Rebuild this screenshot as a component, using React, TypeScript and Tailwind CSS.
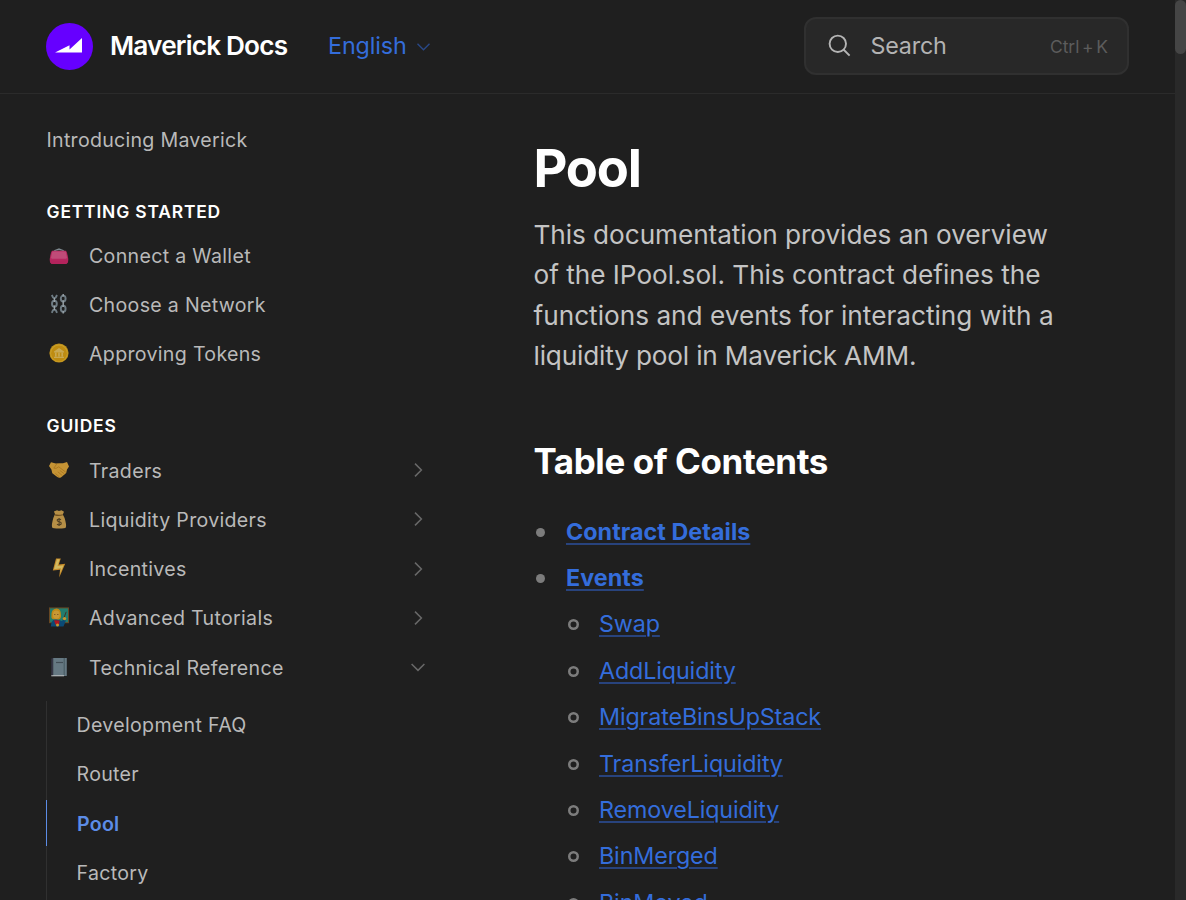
import React from "react";

type IconProps = { children: React.ReactNode };

function Emoji({ children }: IconProps) {
  return (
    <svg viewBox="0 0 20 20" className="mb-[2px] h-[20px] w-[20px] shrink-0 opacity-80">
      {children}
    </svg>
  );
}

const Purse = () => (
  <Emoji>
    <path d="M4 8 Q5 5 10 4.4 Q15 5 16 8" fill="none" stroke="#8b9ba3" strokeWidth="1.4" />
    <path d="M8 4.8 Q10 3.2 12 4.8" fill="none" stroke="#9aa8ae" strokeWidth="1.2" />
    <path d="M3 5.8H17Q18.2 7 19.2 13.5Q19.7 18.8 16.5 19H3.5Q.3 18.8 .8 13.5Q1.8 7 3 5.8Z" fill="#dc2a70" />
    <path d="M3.4 6.4H16.6L17.8 11.5Q18.4 13.6 17 13.8H3Q1.6 13.6 2.2 11.5Z" fill="#e8568f" />
    <path d="M1 15Q10 16.4 19 15Q19 19 16.5 19H3.5Q1 19 1 15Z" fill="#d8246c" />
  </Emoji>
);

const Chains = () => (
  <Emoji>
    <g fill="none" stroke="#82939d" strokeWidth="1.9">
      <path d="M2.8 1 L4 3.4 Q5.4 4.4 6.8 3.4 L8 1" />
      <ellipse cx="5.4" cy="9.8" rx="2.4" ry="3" />
      <path d="M2.8 18.8 L4 16.2 Q5.4 15.2 6.8 16.2 L8 18.8" />
      <ellipse cx="14.2" cy="4.6" rx="2.4" ry="3" />
      <ellipse cx="14.2" cy="14.8" rx="2.4" ry="3" />
    </g>
    <path d="M5.4 4v4M5.4 11.5v4.5M14.2 6.3v6.6M14.2 0v2.6M14.2 17v2.4" stroke="#b9c6cc" strokeWidth="1.4" />
  </Emoji>
);

const Coin = () => (
  <Emoji>
    <circle cx="10" cy="10" r="9.6" fill="#e8ae1c" />
    <circle cx="10" cy="10.2" r="8.6" fill="#f8c32b" />
    <circle cx="10" cy="10.3" r="7.9" fill="#e6a80f" />
    <path d="M5 8.6L10 5L15 8.6V9.4H5ZM6 9.8h1.6v3.6H6ZM9.2 9.8h1.6v3.6H9.2ZM12.4 9.8H14v3.6h-1.6ZM5 13.8h10V15H5Z" fill="#f3cc62" />
  </Emoji>
);

const Handshake = () => (
  <Emoji>
    <path d="M0 6L2 2.2L7 3.4L10 3.2L14 3.2L18 2L20 6.5L18 9.5L17.2 13L12.2 17.2Q10.2 18.5 8.3 17.1L3.3 13.2L2.4 9.5Z" fill="#efb03a" />
    <path d="M8 3.6L4.8 8.2Q7.2 9.2 9.7 6.8L16.8 12.2M13.4 15.6L8.8 11.8M10.4 17L6.4 13.4M15.3 13.8L10.8 10.4" fill="none" stroke="#c98a1e" strokeWidth=".8" />
  </Emoji>
);

const MoneyBag = () => (
  <Emoji>
    <path d="M6 5L4.9 2.5L8 1.3L10 2L12.5 1.2L15 2.7L13.8 5.5L15.6 9Q17.8 16.5 16.8 18.4Q16.2 19.4 10 19.4Q3.8 19.4 3.2 18.4Q2.2 16.5 4.3 9Z" fill="#dcab50" />
    <path d="M6 5.9Q10 7 13.8 5.7" fill="none" stroke="#855c1e" strokeWidth="1.1" />
    <path d="M12 10.8Q10 9.4 8.4 10.6Q7.6 12.3 10.2 12.8Q12.9 13.4 12 15.2Q10 16.5 8 15.2M10.1 9V17" fill="none" stroke="#594422" strokeWidth="1.1" />
  </Emoji>
);

const Bolt = () => (
  <Emoji>
    <path d="M7 .4H11.8L9.8 6.6L16.2 5.8L10.2 19.4L11 11.8L3.8 12.6Z" fill="#efa52a" />
    <path d="M8 1.2H10.6L8.6 7.9L14.6 7.2L10.9 15.5L12 10.2L5 11.2Z" fill="#ffe070" />
  </Emoji>
);

const Teacher = () => (
  <Emoji>
    <path d="M0 .4H20V16.2H0Z" fill="#795225" />
    <path d="M1 1.4H19V15.2H1Z" fill="#229582" />
    <path d="M1.8 19.5L2.5 15.2Q4 12.2 7 12L12.8 14L15.2 12L16.8 13.8L14.5 19.5Z" fill="#07558b" />
    <path d="M2.4 9.5Q1.8 1.8 7.4 1.4Q12 1.2 12 8Q12.3 12.2 9.5 12.5L4.7 12.3Q2 11.8 2.4 9.5Z" fill="#e9a414" />
    <ellipse cx="7.3" cy="7.7" rx="3.4" ry="4.1" fill="#f2b83c" />
    <path d="M5.4 7.5h.9M8.4 7.5h.9" stroke="#704619" />
    <path d="M5 13.2L10.6 13.6L10 18.5L6.5 17.5Z" fill="#d41421" />
    <path d="M14.3 12.8L17.2 4.8" stroke="#4a3929" />
    <circle cx="15.5" cy="11.6" r="1.7" fill="#efb532" />
    <circle cx="8.5" cy="18" r="1.5" fill="#efb532" />
  </Emoji>
);

const Book = () => (
  <Emoji>
    <path d="M2.3 1.4L4.2 1V17.4L2.3 18.7Z" fill="#3b3c50" />
    <path d="M4.2 1H17.8V19H4.2Z" fill="#78909c" />
    <path d="M15.2 1V18" stroke="#4b626d" strokeWidth=".9" />
    <path d="M2.3 18.2H15V19.3H2.3Z" fill="#dfe4e6" />
    <path d="M7 5.5h7" stroke="#4a5963" strokeWidth="1.2" />
  </Emoji>
);

function Chevron({ down = false, className }: { down?: boolean; className: string }) {
  return (
    <svg viewBox="0 0 16 16" fill="none" stroke="currentColor" strokeWidth="1.5" className={className}>
      <path d={down ? "M1.6 5L8 11.4L14.4 5" : "M5 1.6L11.4 8L5 14.4"} />
    </svg>
  );
}

type Item = { label: string; icon: React.ReactNode; arrow?: "right" | "down" };

const started: Item[] = [
  { label: "Connect a Wallet", icon: <Purse /> },
  { label: "Choose a Network", icon: <Chains /> },
  { label: "Approving Tokens", icon: <Coin /> },
];

const guides: Item[] = [
  { label: "Traders", icon: <Handshake />, arrow: "right" },
  { label: "Liquidity Providers", icon: <MoneyBag />, arrow: "right" },
  { label: "Incentives", icon: <Bolt />, arrow: "right" },
  { label: "Advanced Tutorials", icon: <Teacher />, arrow: "right" },
  { label: "Technical Reference", icon: <Book />, arrow: "down" },
];

const events = [
  "Swap",
  "AddLiquidity",
  "MigrateBinsUpStack",
  "TransferLiquidity",
  "RemoveLiquidity",
  "BinMerged",
  "BinMoved",
];

function NavGroup({ title, items, className }: { title: string; items: Item[]; className: string }) {
  return (
    <section className={className}>
      <h2 className="flex h-[39px] items-center pl-[0.5px] text-[17.45px] font-semibold tracking-[0.82px] text-white">{title}</h2>
      <ul>
        {items.map((item) => (
          <li key={item.label} className="flex h-[49.25px] items-center pl-[3px]">
            {item.icon}
            <a className="ml-5 flex-1 pt-[1.2px]">{item.label}</a>
            {item.arrow && <Chevron down={item.arrow === "down"} className="mb-[1px] mr-[8px] h-4 w-4 text-[#686868]" />}
          </li>
        ))}
      </ul>
    </section>
  );
}

function Header() {
  return (
    <header className="flex h-[94px] shrink-0 items-center border-b border-[#2b2b2b] pl-[46px] pr-[46px]">
      <svg viewBox="0 0 47 47" className="h-[47px] w-[47px]">
        <circle cx="23.5" cy="23.5" r="23.5" fill="#6600ff" />
        <path d="M9 29.5L23.5 22.3V26.4L36 15V29.5Z" fill="white" />
      </svg>
      <span className="-mt-[2px] ml-[17px] w-[218px] whitespace-nowrap text-[26.2px] font-semibold tracking-[-0.82px] text-white">Maverick Docs</span>
      <span className="text-[23.3px] tracking-[-0.1px] text-[#346ddb]">English</span>
      <Chevron down className="ml-[9.5px] h-[15px] w-[15px] text-[#294887]" />
      <div className="-mt-[2px] ml-auto flex h-[58px] w-[325px] items-center rounded-[12px] border-2 border-[#303030] bg-[#282828] pl-[22px] pr-[19px]">
        <svg viewBox="0 0 23 23" fill="none" stroke="#b5b5b5" strokeWidth="1.9" className="h-[23px] w-[23px]">
          <circle cx="9.8" cy="9.8" r="8.2" />
          <path d="M15.5 15.5L21.6 21.6" />
        </svg>
        <span className="ml-[19.5px] mt-[2px] flex-1 text-[23.3px] tracking-[-0.2px] text-[#b3b3b3]">Search</span>
        <span className="mt-[3px] text-[17.45px] tracking-[-0.05px] text-[#5c5c5c] [word-spacing:-2.1px]">Ctrl + K</span>
      </div>
    </header>
  );
}

function Sidebar() {
  return (
    <nav className="w-[434px] shrink-0 pl-[46px] pt-[22px] text-[19.6px] tracking-[0.31px] text-[#b9b9b9]">
      <a className="flex h-[49.25px] items-center pl-[0.5px] tracking-[0.27px]">Introducing Maverick</a>
      <NavGroup title="GETTING STARTED" items={started} className="mt-[27px]" />
      <NavGroup title="GUIDES" items={guides} className="mt-[28px]" />
      <ul className="mt-[8.5px] border-l border-[#303030]">
        {["Development FAQ", "Router", "Pool", "Factory", "Position"].map((label) =>
          label === "Pool" ? (
            <li key={label} className="-ml-px mb-[2.7px] mt-[0.7px] flex h-[46.3px] items-center border-l border-[#5c8ce6] pl-[30px] font-semibold text-[#5c8ce6]">
              <span className="pt-[3px] tracking-[0.25px]">{label}</span>
            </li>
          ) : (
            <li key={label} className="flex h-[49.25px] items-center pl-[29.5px]">
              <span className="pt-[1px]">{label}</span>
            </li>
          ),
        )}
      </ul>
    </nav>
  );
}

const linkStyle =
  "text-[#346ddb] underline decoration-[#28437d] decoration-2 underline-offset-[3px]";

function Content() {
  return (
    <main className="ml-[99.5px] w-[560px] pt-[42px]">
      <h1 className="text-[52.4px] font-bold leading-[65px] tracking-[-1.2px] text-white">Pool</h1>
      <p className="mt-[14px] text-[26.2px] leading-[40.4px] text-[#c4c4c4]">
        <span className="tracking-[-0.06px]">This documentation provides an overview</span><br />
        <span className="tracking-[-0.02px]">of the IPool.sol. This contract defines the</span><br />
        <span>functions and events for interacting with a</span><br />
        <span className="tracking-[-0.17px]">liquidity pool in Maverick AMM.</span>
      </p>
      <h2 className="mt-[62px] text-[34.9px] font-bold leading-[44px] tracking-[-0.38px] text-white">Table of Contents</h2>
      <ul className="mt-[26.3px] text-[23.3px]">
        {["Contract Details", "Events"].map((label) => (
          <li key={label} className="flex h-[46.4px] items-center pl-[2.5px]">
            <span className="h-[9px] w-[9px] rounded-full bg-[#7c7c7c]" />
            <a className={`ml-[21px] font-bold tracking-[0.05px] ${linkStyle}`}>{label}</a>
          </li>
        ))}
        {events.map((label) => (
          <li key={label} className="flex h-[46.4px] items-center pl-[34.7px]">
            <span className="h-[11px] w-[11px] rounded-full shadow-[inset_0_0_0_2.5px_#7c7c7c]" />
            <a className={`ml-[19.8px] tracking-[-0.12px] ${linkStyle}`}>{label}</a>
          </li>
        ))}
      </ul>
    </main>
  );
}

export default function App() {
  return (
    <div className="flex h-[900px] w-[1186px] overflow-hidden bg-[#1f1f1f] font-['Inter',sans-serif] antialiased">
      <div className="flex h-full w-[1175px] flex-col">
        <Header />
        <div className="flex min-h-0 flex-1 overflow-hidden">
          <Sidebar />
          <Content />
        </div>
      </div>
      <div className="h-full w-[11px] bg-[#292929]">
        <div className="h-[54px] rounded-full bg-[#454545]" />
      </div>
    </div>
  );
}
